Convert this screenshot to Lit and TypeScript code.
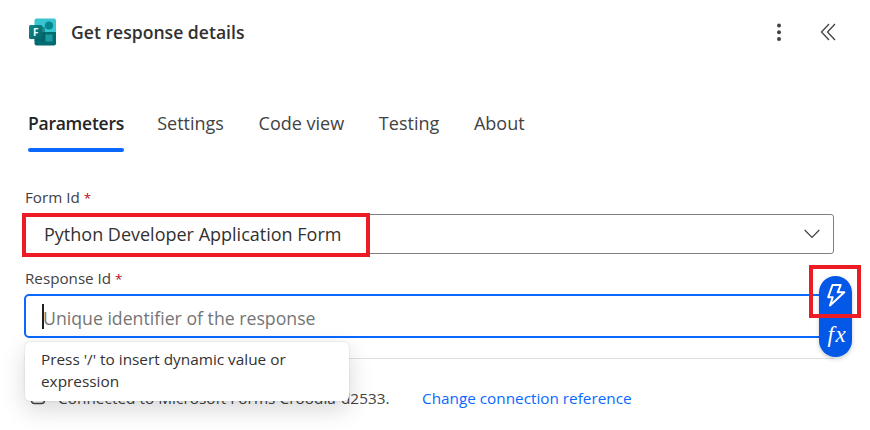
import { LitElement, html, css, svg } from "lit";
import { customElement } from "lit/decorators.js";

const formsIcon = svg`<svg class="logo" viewBox="0 0 28 28" width="28" height="28">
  <defs>
    <linearGradient id="tile" x1="0" y1="0" x2="1" y2="1"><stop offset="0" stop-color="#0d8a8e"/><stop offset="1" stop-color="#046469"/></linearGradient>
    <clipPath id="page"><rect x="5.5" y="0.5" width="21.5" height="27" rx="2"/></clipPath>
  </defs>
  <g clip-path="url(#page)">
    <rect x="5" y="0" width="22" height="14" fill="#37c6d0"/>
    <rect x="5" y="14" width="22" height="14" fill="#036c70"/>
    <rect x="5" y="9" width="11" height="14" fill="#026065" opacity=".55"/>
    <circle cx="20" cy="7.5" r="4.1" fill="#04888d"/>
    <rect x="16.5" y="16.5" width="7" height="7" fill="#1a9ba1"/>
  </g>
  <rect x="0" y="7" width="13.5" height="14" rx="1.5" fill="url(#tile)"/>
  <text x="6.8" y="17.6" text-anchor="middle" class="logo-letter">F</text>
</svg>`;

@customElement("app-root")
export class AppRoot extends LitElement {
  static styles = css`
    :host { display: block; position: relative; width: 870px; height: 430px; overflow: hidden; background: #fff; color: #424242; font-family: "Open Sans", "Noto Sans", sans-serif; }
    * { box-sizing: border-box; }
    svg { display: block; flex: none; }
    header { display: flex; align-items: center; height: 64px; padding: 0 34px 0 29px; }
    .logo-letter { font: bold 10px "Open Sans", sans-serif; fill: #fff; }
    h1 { flex: 1; margin: 0 0 0 14px; font-size: 17.6px; font-weight: 600; color: #323130; white-space: nowrap; }
    .more { margin-right: 38.5px; }
    nav { display: flex; gap: 34.7px; margin: 40px 0 0 28px; height: 48px; }
    .tab { height: 48px; line-height: 39px; font-size: 18px; white-space: nowrap; }
    .active { font-size: 17.5px; letter-spacing: -0.25px; margin-right: -1.5px; font-weight: 600; color: #242424; position: relative; }
    .active::after { content: ""; position: absolute; left: 0; right: 0; top: 44px; height: 4px; border-radius: 2px; background: #0a68ff; }
    .form { width: 810px; margin: 35px 0 0 24px; }
    label { display: block; height: 27px; line-height: 20px; padding-left: 1px; font-size: 15.2px; }
    .rid { height: 26px; }
    .req { color: #b10e1c; font-size: 13.5px; }
    .select { display: flex; align-items: center; justify-content: space-between; height: 40px; padding: 0 13px 0 19px; border: 1px solid #808080; border-radius: 3px; font-size: 18px; color: #323130; margin-bottom: 14px; }
    .input { display: flex; align-items: center; position: relative; height: 44px; padding: 4px 0 0 17px; border: 2px solid #0a68ff; border-radius: 5px; font-size: 17.7px; color: #757575; }
    .caret { position: absolute; left: 16px; top: 8px; width: 2px; height: 25px; background: #202020; }
    .tip { position: absolute; left: 25px; top: 342px; width: 324px; height: 59px; padding: 6px 16px; border-radius: 5px; background: #fff; box-shadow: 0 0 2px rgba(0,0,0,.16), 0 8px 24px rgba(0,0,0,.16); font-size: 15.35px; line-height: 22px; color: #323232; white-space: nowrap; }
    footer { display: flex; align-items: center; width: 810px; height: 82px; margin: 20px 0 0 24px; padding: 0 0 3px 6px; border-top: 1px solid #e0e0e0; font-size: 15.3px; white-space: nowrap; }
    .conn { margin-left: 12px; width: 364px; letter-spacing: 0.06px; }
    a { color: #0a68ff; }
    .pill { position: absolute; left: 819px; top: 276px; width: 33px; height: 81px; border-radius: 17px; background: #0458e8; box-shadow: 0 2px 4px rgba(0,0,0,.2); }
    .fx { font: italic 23px "Liberation Serif", serif; fill: #fff; stroke: none; }
    .mark { position: absolute; border: 4px solid #ed1c24; }
    .mark-form { left: 22px; top: 213px; width: 348px; height: 44px; }
    .mark-bolt { left: 809px; top: 265px; width: 52px; height: 53px; }
  `;

  render() {
    return html`
      <header>
        ${formsIcon}
        <h1>Get response details</h1>
        <svg class="more" width="6" height="20" viewBox="0 0 6 20" fill="#424242"><circle cx="3" cy="3.5" r="2"/><circle cx="3" cy="10.2" r="2"/><circle cx="3" cy="17" r="2"/></svg>
        <svg width="16" height="18" viewBox="0 0 16 18" fill="none" stroke="#424242" stroke-width="1.3"><path d="M9 1 1.500 9 9 17M15 1 7.500 9l7.500 8"/></svg>
      </header>
      <nav>
        <span class="tab active">Parameters</span><span class="tab">Settings</span><span class="tab">Code view</span><span class="tab">Testing</span><span class="tab">About</span>
      </nav>
      <div class="form">
        <label>Form Id <span class="req">*</span></label>
        <div class="select"><span class="value">Python Developer Application Form</span>
          <svg width="16" height="10" viewBox="0 0 16 10" fill="none" stroke="#424242" stroke-width="1.2"><path d="m.7 1 7.3 7.3L15.3 1"/></svg>
        </div>
        <label class="rid">Response Id <span class="req">*</span></label>
        <div class="input"><i class="caret"></i><span class="hint">Unique identifier of the response</span></div>
      </div>
      <footer>
        <svg width="16" height="16" viewBox="0 0 16 16" fill="none" stroke="#424242" stroke-width="1.4"><rect x="1.500" y="1.500" width="13" height="12" rx="3"/></svg>
        <span class="conn">Connected to Microsoft Forms Croodia-d2533.</span>
        <a>Change connection reference</a>
      </footer>
      <div class="tip">Press '/' to insert dynamic value or<br>expression</div>
      <div class="pill">
        <svg width="33" height="81" viewBox="0 0 33 81" fill="none" stroke="#fff" stroke-width="2" stroke-linejoin="round">
          <path d="M13.500 9h8.200l-3 7.300h6.600L11 29.500l2.700-8.300H9.200z"/>
          <text class="fx" x="8.500" y="66">f</text>
          <text class="fx" x="16.500" y="66">x</text>
        </svg>
      </div>
      <div class="mark mark-form"></div>
      <div class="mark mark-bolt"></div>
    `;
  }
}
